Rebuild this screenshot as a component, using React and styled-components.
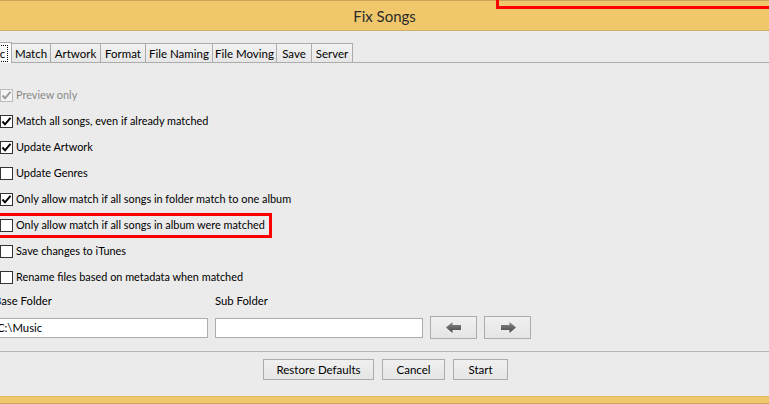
import React from 'react';
import styled, { createGlobalStyle, css } from 'styled-components';

const Global = createGlobalStyle`
  html, body { margin: 0; padding: 0; overflow: hidden; background: #ebebeb; }
  body {
    font-family: "Segoe UI", Lato, "Liberation Sans", sans-serif;
    font-size: 11px;
    color: #000;
  }
  * { box-sizing: border-box; }
`;

const Window = styled.div`
  position: relative;
  width: 769px;
  height: 404px;
  display: flex;
  flex-direction: column;
  overflow: hidden;
  background: #ebebeb;
`;

const TitleBar = styled.div`
  height: 31px;
  flex: none;
  border-top: 1px solid #c9a65c;
  border-bottom: 1px solid #d3b068;
  background: #f0c86b;
  display: flex;
  align-items: center;
  justify-content: center;
  font-size: 15px;
  color: #2b2b2b;
  padding-top: 1px;
`;

const Annotation = styled.div`
  position: absolute;
  border: 3px solid #ff0000;
  pointer-events: none;
  z-index: 5;
`;

const TopMark = styled(Annotation)`
  left: 496px;
  top: -20px;
  right: -20px;
  height: 29px;
`;

const TabStrip = styled.div`
  margin-top: 11px;
  margin-left: -28px;
  height: 20px;
  display: flex;
  align-items: flex-end;
  flex: none;
`;

const Tab = styled.div`
  width: ${p => p.$w}px;
  height: ${p => (p.$active ? 21 : 19)}px;
  margin-left: -1px;
  margin-bottom: ${p => (p.$active ? -1 : 0)}px;
  border: 1px solid #acacac;
  border-bottom: none;
  background: ${p => (p.$active ? '#fbfbfb' : 'linear-gradient(#f2f2f2, #e6e6e6)')};
  display: flex;
  align-items: center;
  justify-content: center;
  position: relative;
  z-index: ${p => (p.$active ? 2 : 1)};
  white-space: nowrap;
  font-size: 11.5px;
  &:first-child { margin-left: 0; }
`;

const Focus = styled.span`
  border: 1px dotted #000;
  padding: 0 2px;
  line-height: 15px;
`;

const Pane = styled.div`
  flex: 1;
  border-top: 1px solid #acacac;
  padding-top: 26px;
  display: flex;
  flex-direction: column;
`;

const CheckList = styled.div`
  display: flex;
  flex-direction: column;
  gap: 13px;
`;

const CheckRow = styled.div`
  position: relative;
  display: flex;
  align-items: center;
  gap: 3px;
  height: 13px;
  width: fit-content;
  color: ${p => (p.$disabled ? '#8a8a8a' : '#000')};
  ${p => p.$highlight && css`
    &::after {
      content: '';
      position: absolute;
      left: -10px;
      right: -7px;
      top: -6px;
      bottom: -6px;
      border: 3px solid #ff0000;
    }
  `}
`;

const Box = styled.span`
  width: 13px;
  height: 13px;
  flex: none;
  border: 1px solid ${p => (p.$disabled ? '#bcbcbc' : '#333')};
  background: ${p => (p.$disabled ? '#f4f4f4' : '#fff')};
  display: flex;
  align-items: center;
  justify-content: center;
`;

const RowText = styled.span`
  line-height: 13px;
  white-space: nowrap;
  font-size: 10.9px;
  margin-top: -2px;
`;

const FolderGrid = styled.div`
  margin-top: 9px;
  margin-left: -6px;
  display: grid;
  grid-template-columns: 214px 208px 47px 47px;
  grid-template-rows: 16px 23px;
  column-gap: 7px;
  row-gap: 7px;
  align-items: center;
`;

const FieldLabel = styled.div`
  line-height: 16px;
  white-space: nowrap;
  font-size: 11.3px;
`;

const Field = styled.input`
  height: 20px;
  border: 1px solid #abadb3;
  background: #fff;
  font: inherit;
  font-size: 11.3px;
  padding: 0 2px;
  outline: none;
  color: #000;
`;

const Button = styled.button`
  width: ${p => p.$w}px;
  height: ${p => p.$h || 21}px;
  border: 1px solid #acacac;
  background: linear-gradient(#f0f0f0, #e5e5e5);
  font: inherit;
  font-size: 11.5px;
  color: #000;
  padding: 0;
  display: flex;
  align-items: center;
  justify-content: center;
`;

const Separator = styled.div`
  margin-top: 12px;
  height: 1px;
  background: #b5b5b5;
`;

const ButtonRow = styled.div`
  margin-top: 7px;
  display: flex;
  justify-content: center;
  gap: 8px;
  padding-left: 2px;
`;

const BottomBand = styled.div`
  height: 8px;
  flex: none;
  background: #f0c86b;
  border-top: 1px solid #e2bd66;
  border-bottom: 1px solid #c9a65c;
`;

const Check = ({ disabled }) => (
  <svg width="11" height="11" viewBox="0 0 11 11">
    <path d="M1.5 5.5 L4 8.3 L9.5 1.8" fill="none" stroke={disabled ? '#9a9a9a' : '#000'} strokeWidth="2" />
  </svg>
);

const Arrow = ({ dir }) => (
  <svg width="16" height="11" viewBox="0 0 16 11" style={{ transform: dir === 'right' ? 'scaleX(-1)' : 'none' }}>
    <defs>
      <linearGradient id={`ag-${dir}`} x1="0" y1="0" x2="0" y2="1">
        <stop offset="0" stopColor="#8a8a8a" />
        <stop offset="1" stopColor="#454545" />
      </linearGradient>
    </defs>
    <polygon points="0,5.5 6.5,0 6.5,3 15,3 15,8 6.5,8 6.5,11" fill={`url(#ag-${dir})`} />
  </svg>
);

const tabs = [
  { label: 'Basic', w: 40, active: true },
  { label: 'Match', w: 40 },
  { label: 'Artwork', w: 51 },
  { label: 'Format', w: 46 },
  { label: 'File Naming', w: 68 },
  { label: 'File Moving', w: 65 },
  { label: 'Save', w: 36 },
  { label: 'Server', w: 42 },
];

const options = [
  { label: 'Preview only', checked: true, disabled: true },
  { label: 'Match all songs, even if already matched', checked: true },
  { label: 'Update Artwork', checked: true },
  { label: 'Update Genres', checked: false },
  { label: 'Only allow match if all songs in folder match to one album', checked: true },
  { label: 'Only allow match if all songs in album were matched', checked: false, highlight: true },
  { label: 'Save changes to iTunes', checked: false },
  { label: 'Rename files based on metadata when matched', checked: false },
];

export default function App() {
  return (
    <Window>
      <Global />
      <TitleBar>Fix Songs</TitleBar>
      <TopMark />
      <TabStrip>
        {tabs.map(t => (
          <Tab key={t.label} $w={t.w} $active={t.active}>
            {t.active ? <Focus>{t.label}</Focus> : t.label}
          </Tab>
        ))}
      </TabStrip>
      <Pane>
        <CheckList>
          {options.map(o => (
            <CheckRow key={o.label} $disabled={o.disabled} $highlight={o.highlight}>
              <Box $disabled={o.disabled}>{o.checked && <Check disabled={o.disabled} />}</Box>
              <RowText>{o.label}</RowText>
            </CheckRow>
          ))}
        </CheckList>
        <FolderGrid>
          <FieldLabel>Base Folder</FieldLabel>
          <FieldLabel>Sub Folder</FieldLabel>
          <span />
          <span />
          <Field defaultValue="C:\Music" />
          <Field defaultValue="" />
          <Button $w={47} $h={23}><Arrow dir="left" /></Button>
          <Button $w={47} $h={23}><Arrow dir="right" /></Button>
        </FolderGrid>
        <Separator />
        <ButtonRow>
          <Button $w={111}>Restore Defaults</Button>
          <Button $w={63}>Cancel</Button>
          <Button $w={55}>Start</Button>
        </ButtonRow>
      </Pane>
      <BottomBand />
    </Window>
  );
}
